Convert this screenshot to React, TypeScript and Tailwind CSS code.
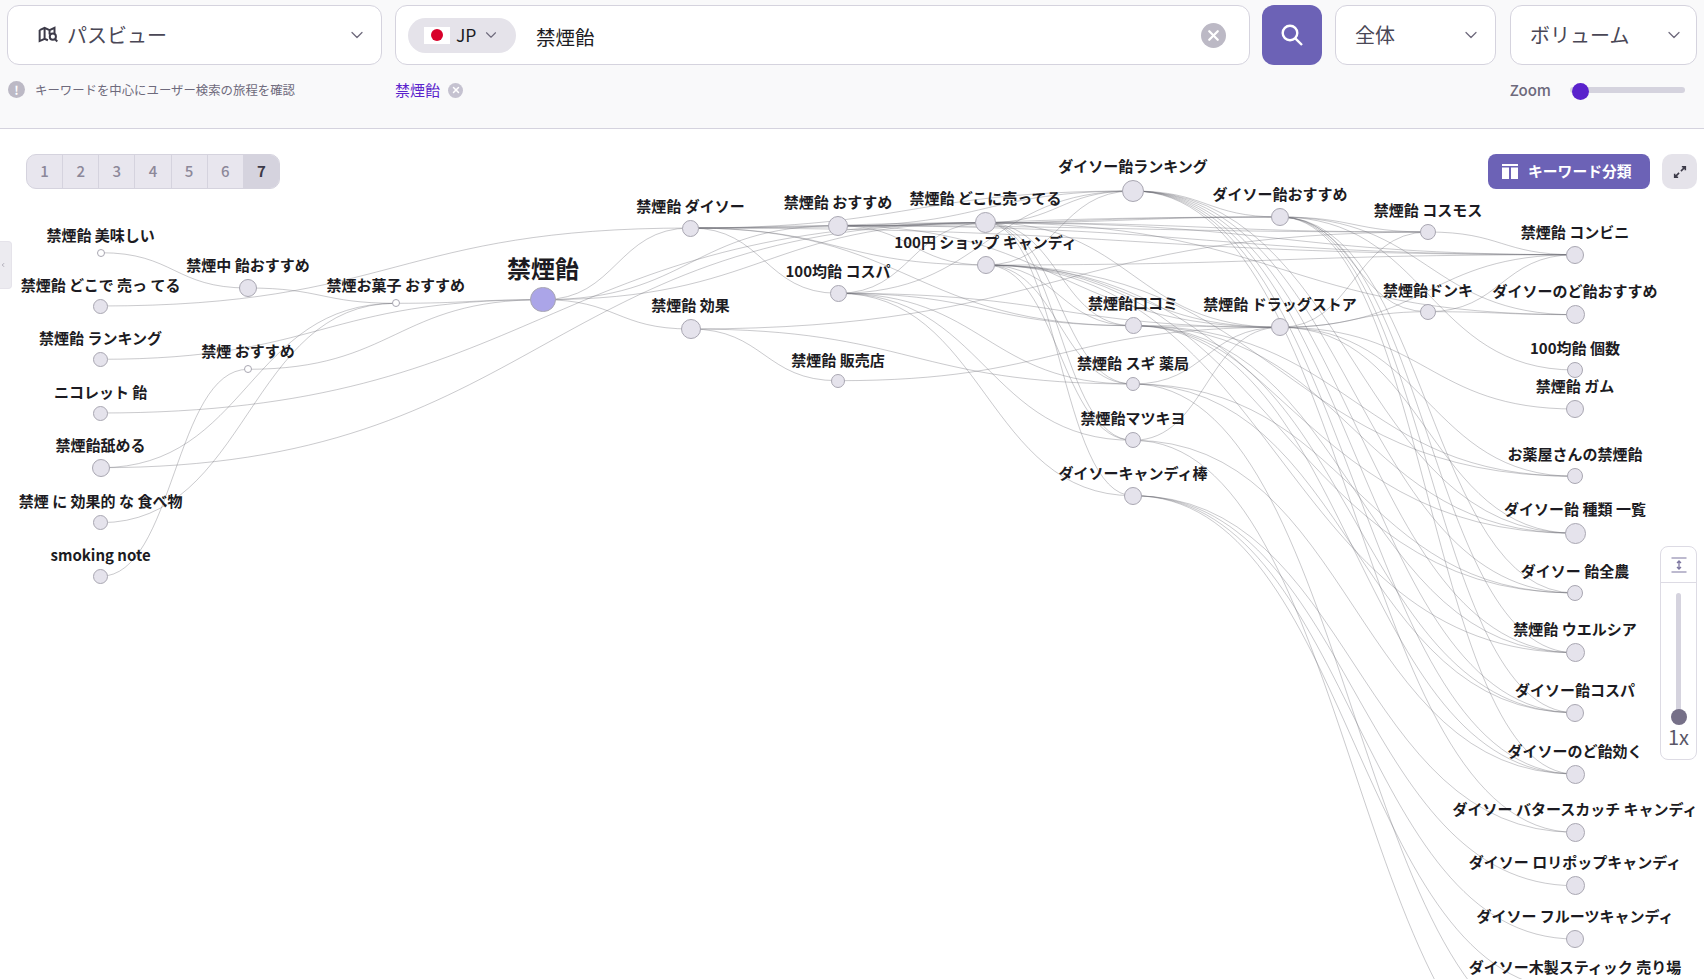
import React from "react";
import { ChevronDown, ChevronLeft, X } from "lucide-react";

type N = { id: string; x: number; y: number; r: number; label: string };
const C = { a: 100.6, b: 248, c: 395.7, d: 543, e: 690.5, f: 838, g: 985.5, h: 1133, i: 1280, j: 1428, k: 1575 };
const nodes: N[] = [
  { id: "a0", x: C.a, y: 252.7, r: 4, label: "禁煙飴 美味しい" },
  { id: "a1", x: C.a, y: 306, r: 7.5, label: "禁煙飴 どこで 売っ てる" },
  { id: "a2", x: C.a, y: 359.3, r: 7.5, label: "禁煙飴 ランキング" },
  { id: "a3", x: C.a, y: 413, r: 7.5, label: "ニコレット 飴" },
  { id: "a4", x: C.a, y: 467.7, r: 9, label: "禁煙飴舐める" },
  { id: "a5", x: C.a, y: 522.7, r: 7.5, label: "禁煙 に 効果的 な 食べ物" },
  { id: "a6", x: C.a, y: 576.3, r: 7.5, label: "smoking note" },
  { id: "b0", x: C.b, y: 288, r: 9, label: "禁煙中 飴おすすめ" },
  { id: "b1", x: C.b, y: 369.3, r: 4, label: "禁煙 おすすめ" },
  { id: "c0", x: C.c, y: 303.3, r: 4, label: "禁煙お菓子 おすすめ" },
  { id: "e0", x: C.e, y: 228, r: 8.5, label: "禁煙飴 ダイソー" },
  { id: "e1", x: C.e, y: 329, r: 10, label: "禁煙飴 効果" },
  { id: "f0", x: C.f, y: 225.7, r: 10, label: "禁煙飴 おすすめ" },
  { id: "f1", x: C.f, y: 293.3, r: 8.5, label: "100均飴 コスパ" },
  { id: "f2", x: C.f, y: 380.7, r: 7, label: "禁煙飴 販売店" },
  { id: "g0", x: C.g, y: 222.7, r: 10.5, label: "禁煙飴 どこに売ってる" },
  { id: "g1", x: C.g, y: 265, r: 9, label: "100円 ショップ キャンディ" },
  { id: "h0", x: C.h, y: 191, r: 11, label: "ダイソー飴ランキング" },
  { id: "h1", x: C.h, y: 325.7, r: 8.5, label: "禁煙飴口コミ" },
  { id: "h2", x: C.h, y: 384, r: 7, label: "禁煙飴 スギ 薬局" },
  { id: "h3", x: C.h, y: 440.3, r: 8, label: "禁煙飴マツキヨ" },
  { id: "h4", x: C.h, y: 495.7, r: 9, label: "ダイソーキャンディ棒" },
  { id: "i0", x: C.i, y: 217, r: 9, label: "ダイソー飴おすすめ" },
  { id: "i1", x: C.i, y: 327.3, r: 9, label: "禁煙飴 ドラッグストア" },
  { id: "j0", x: C.j, y: 232, r: 8, label: "禁煙飴 コスモス" },
  { id: "j1", x: C.j, y: 311.7, r: 8, label: "禁煙飴ドンキ" },
  { id: "k0", x: C.k, y: 254.7, r: 9, label: "禁煙飴 コンビニ" },
  { id: "k1", x: C.k, y: 314.7, r: 9.5, label: "ダイソーのど飴おすすめ" },
  { id: "k2", x: C.k, y: 370, r: 8, label: "100均飴 個数" },
  { id: "k3", x: C.k, y: 409, r: 9, label: "禁煙飴 ガム" },
  { id: "k4", x: C.k, y: 476.3, r: 8, label: "お薬屋さんの禁煙飴" },
  { id: "k5", x: C.k, y: 533.3, r: 10.5, label: "ダイソー飴 種類 一覧" },
  { id: "k6", x: C.k, y: 593, r: 8, label: "ダイソー 飴全農" },
  { id: "k7", x: C.k, y: 652.7, r: 9.5, label: "禁煙飴 ウエルシア" },
  { id: "k8", x: C.k, y: 712.7, r: 9, label: "ダイソー飴コスパ" },
  { id: "k9", x: C.k, y: 774, r: 9.5, label: "ダイソーのど飴効く" },
  { id: "k10", x: C.k, y: 832.3, r: 9.5, label: "ダイソー バタースカッチ キャンディ" },
  { id: "k11", x: C.k, y: 885.7, r: 9.5, label: "ダイソー ロリポップキャンディ" },
  { id: "k12", x: C.k, y: 939, r: 9, label: "ダイソー フルーツキャンディ" },
  { id: "k13", x: C.k, y: 990, r: 9, label: "ダイソー木製スティック 売り場" },
];
const center = { x: C.d, y: 299.7, r: 12.6, label: "禁煙飴" };
const ghost: Record<string, { x: number; y: number }> = {
  k14: { x: C.k, y: 1045 },
  k15: { x: C.k, y: 1100 },
  d0: { x: center.x, y: center.y },
};

const edges = `a0-b0 b0-c0 a1-e0 a2-d0 b1-d0 a6-b1 a3-g0 a4-c0 a4-g0 a5-c0 c0-d0
d0-e0 d0-e1 d0-f0 d0-g0
e0-f0 e0-g0 e0-f1 e0-g1 e0-h1 e0-i0 e0-h0 e0-k0
f0-g0 f0-h0 f0-g1 f0-i0 f0-k0 f0-j0 f0-i1
f1-g0 f1-h0 f1-h1 f1-h2 f1-i1 f1-h4 f1-h3
e1-f2 e1-h2 e1-j0 f2-i1
g0-h0 g0-i0 g0-j0 g0-k0 g0-h1 g0-h2 g0-h3 g0-h4 g0-i1 g0-k1
g1-h0 g1-h1 g1-h2 g1-h3 g1-i1 g1-k0 g1-k4 g1-k5 g1-k6 g1-k7
h0-i0 h0-k6 h0-k7 h0-k8 h0-k9 h0-k10 h0-k5
i0-j1 i0-k1 i0-k2 i0-k6 i0-k7 i0-k8 i0-k9 i0-j0
h1-i1 h1-k4 h1-k5 h1-k7 h1-k8 h1-k9 h2-i1 h2-k6 h2-k8 h2-k14 h3-i1 h3-k15 h3-k9
h4-k10 h4-k11 h4-k12 h4-k13
i1-j0 i1-j1 i1-k3 i1-k4 i1-k5 i1-k0
j0-k0 j1-k0 j1-k1`
  .split(/\s+/)
  .map((s) => s.split("-"));

const pos: Record<string, { x: number; y: number }> = { ...ghost };
nodes.forEach((n) => (pos[n.id] = n));
const linkPath = (a: string, b: string) => {
  const p = pos[a];
  const q = pos[b];
  const m = (p.x + q.x) / 2;
  return `M${p.x} ${p.y}C${m} ${p.y} ${m} ${q.y} ${q.x} ${q.y}`;
};

function Chevron({ className = "" }: { className?: string }) {
  return <ChevronDown size={20} strokeWidth={1.5} className={`text-[#6e6a7c] ${className}`} />;
}

function Node({ n }: { n: N }) {
  const small = n.r <= 4;
  return (
    <div
      className={`absolute rounded-full border-[1.5px] border-[#a9a7b2] ${small ? "bg-white" : "bg-[#e5e3ec]"}`}
      style={{ left: n.x - n.r, top: n.y - 129 - n.r, width: n.r * 2, height: n.r * 2 }}
    >
      <span className="absolute left-1/2 bottom-full mb-[5px] -translate-x-1/2 whitespace-nowrap text-[15px] leading-5 font-bold text-[#1c1b22]">
        {n.label}
      </span>
    </div>
  );
}

const pages = ["1", "2", "3", "4", "5", "6"];

export default function App() {
  return (
    <div className="flex h-[979px] w-full flex-col overflow-hidden bg-white font-['Noto_Sans_CJK_JP',sans-serif] text-[#1c1b22]">
      <header className="h-[129px] shrink-0 border-b border-[#d5d3de] bg-[#f9f9fa] pt-[5px]">
        <div className="flex h-[60px] pl-[7px]">
          <div className="flex w-[375px] items-center rounded-xl border border-[#d5d3de] bg-white pl-[30px] pr-[14px]">
            <svg width="22" height="20" viewBox="0 0 20 18" fill="none" stroke="#3c3a48" strokeWidth="1.8" className="mr-[7px]">
              <path d="M1.5 4.5 6 2.5l4.5 2 4.5-2v5M1.5 4.5v10l4.5-2 3 1.3M6 2.5v10M10.5 4.5v4" />
              <circle cx="13.5" cy="10.5" r="2.8" />
              <path d="m15.5 12.7 2 2.2" />
            </svg>
            <span className="text-[20px] text-[#4a4756]">パスビュー</span>
            <Chevron className="ml-auto" />
          </div>
          <div className="ml-[13px] flex w-[855px] items-center rounded-xl border border-[#d5d3de] bg-white pl-3 pr-[23px]">
            <div className="flex h-[35px] w-[108px] items-center rounded-full bg-[#e5e3ea] pl-4">
              <div className="flex h-[17px] w-[26px] items-center justify-center bg-white">
                <div className="h-3 w-3 rounded-full bg-[#d8002a]" />
              </div>
              <span className="ml-[6px] text-[17.5px] leading-none">JP</span>
              <ChevronDown size={18} strokeWidth={1.5} className="ml-[6px] text-[#6e6a7c]" />
            </div>
            <span className="ml-5 pt-[3px] text-[19.5px] text-[#1c1b22]">禁煙飴</span>
            <div className="ml-auto flex h-[25px] w-[25px] items-center justify-center rounded-full bg-[#bcb9c5]">
              <X size={17} strokeWidth={3.2} className="text-white" />
            </div>
          </div>
          <div className="ml-3 flex w-[60px] items-center justify-center rounded-xl bg-[#6c62b6]">
            <svg width="22" height="22" viewBox="0 0 22 22" fill="none" stroke="white" strokeWidth="2.4">
              <circle cx="9" cy="9" r="7.3" />
              <path d="M14.3 14.3 21 21" />
            </svg>
          </div>
          <div className="ml-[13px] flex w-[161px] items-center rounded-xl border border-[#d5d3de] bg-white pl-[19px] pr-[14px]">
            <span className="text-[20px] text-[#4a4756]">全体</span>
            <Chevron className="ml-auto" />
          </div>
          <div className="ml-[14px] flex w-[187px] items-center rounded-xl border border-[#d5d3de] bg-white pl-[19px] pr-3">
            <span className="text-[20px] text-[#4a4756]">ボリューム</span>
            <Chevron className="ml-auto" />
          </div>
        </div>
        <div className="mt-[13px] flex h-6 items-center pl-2">
          <div className="flex w-[387px] items-center">
            <div className="flex h-[17px] w-[17px] items-center justify-center rounded-full bg-[#bcb9c5] text-[12px] leading-none font-bold text-white">!</div>
            <span className="ml-[10px] text-[12.4px] text-[#6e6a7c]">キーワードを中心にユーザー検索の旅程を確認</span>
          </div>
          <span className="text-[15px] text-[#5a22cc]">禁煙飴</span>
          <div className="ml-[8px] flex h-[15px] w-[15px] items-center justify-center rounded-full bg-[#c5c2d0]">
            <X size={10} strokeWidth={3.5} className="text-white" />
          </div>
          <span className="ml-auto text-[15px] font-medium text-[#6e6a7c]">Zoom</span>
          <div className="relative ml-[19px] mr-[19px] h-[6px] w-[115px] rounded-full bg-[#d5d3de]">
            <div className="absolute -top-[3px] left-[2px] h-[17px] w-[17px] -translate-y-[1px] rounded-full bg-[#5a22cc]" />
          </div>
        </div>
      </header>

      <main className="relative flex-1 overflow-hidden">
        <svg className="absolute inset-0 h-full w-full" viewBox="0 129 1704 850" preserveAspectRatio="xMinYMin meet" fill="none">
          {edges.map(([a, b], i) => (
            <path key={i} d={linkPath(a, b)} stroke="#6b6b73" strokeOpacity="0.4" strokeWidth="0.9" />
          ))}
        </svg>

        {nodes.map((n) => (
          <Node key={n.id} n={n} />
        ))}
        <div
          className="absolute rounded-full border-[1.5px] border-[#a9a7b2] bg-[#aba5e8]"
          style={{ left: center.x - center.r, top: center.y - 129 - center.r, width: center.r * 2, height: center.r * 2 }}
        >
          <span className="absolute left-1/2 bottom-full mb-1 -translate-x-1/2 whitespace-nowrap text-[24px] leading-8 font-bold text-[#1c1b22]">
            {center.label}
          </span>
        </div>

        <div className="absolute left-[26px] top-[25px] flex h-[35px] w-[254px] overflow-hidden rounded-[10px] border border-[#d5d3de] bg-[#e8e6ee]">
          {pages.map((p) => (
            <div key={p} className="flex flex-1 items-center justify-center border-r border-[#d5d3de] text-[15px] font-medium text-[#8c8899]">
              {p}
            </div>
          ))}
          <div className="flex flex-1 items-center justify-center bg-[#d5d3de] text-[15px] font-bold text-[#3c3a48]">7</div>
        </div>

        <div className="absolute left-0 top-[112px] flex h-12 w-3 items-center justify-start rounded-r-[4px] border border-l-0 border-[#e5e3ea] bg-[#ecebf0]">
          <ChevronLeft size={6} strokeWidth={2} className="text-[#6e6a7c]" />
        </div>

        <div className="absolute left-[1488px] top-[25px] flex h-[35px] w-[162px] items-center rounded-lg bg-[#6c62b6] pl-[14px] text-white">
          <svg width="16" height="15" viewBox="0 0 16 15" fill="white">
            <rect width="16" height="2" />
            <rect y="3.5" width="7" height="11.5" />
            <rect x="9" y="3.5" width="7" height="11.5" />
          </svg>
          <span className="ml-[10px] text-[14.8px] font-bold">キーワード分類</span>
        </div>
        <div className="absolute left-[1662px] top-[25px] flex h-[35px] w-[35px] items-center justify-center rounded-[10px] bg-[#e5e3ea]">
          <svg width="14" height="14" viewBox="0 0 15 15" fill="none" stroke="#3c3a48" strokeWidth="1.7">
            <path d="M8.5 6.5 13 2M9.5 1.8h3.7v3.7M6.5 8.5 2 13M5.5 13.2H1.8V9.5" />
          </svg>
        </div>

        <div className="absolute left-[1660px] top-[417px] flex h-[214px] w-[37px] flex-col items-center rounded-lg border border-[#dddbe4] bg-white">
          <div className="flex h-9 w-full shrink-0 items-center justify-center border-b border-[#dddbe4]">
            <svg width="16" height="16" viewBox="0 0 16 16" fill="none" stroke="#7c76a0">
              <path d="M0.5 1h15M0.5 15h15" strokeWidth="1.2" />
              <path d="M8 4.5v7M6 6l2-2 2 2M6 10l2 2 2-2" strokeWidth="1.3" />
            </svg>
          </div>
          <div className="relative mt-[10px] h-[125px] w-[5px] rounded-full bg-[#d5d3de]">
            <div className="absolute -left-[5.5px] top-[116px] h-4 w-4 rounded-full bg-[#767088]" />
          </div>
          <span className="mt-[7px] text-[20px] leading-6 text-[#5a5768]">1x</span>
        </div>
      </main>
    </div>
  );
}
